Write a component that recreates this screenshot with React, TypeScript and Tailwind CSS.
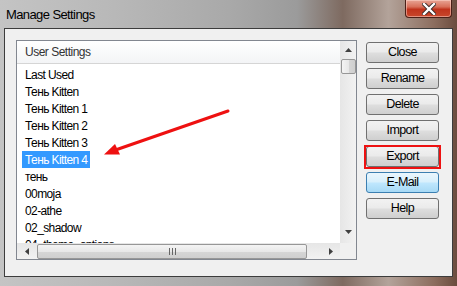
import React from "react";

const items = [
  "Last Used",
  "Тень Kitten",
  "Тень Kitten 1",
  "Тень Kitten 2",
  "Тень Kitten 3",
  "Тень Kitten 4",
  "тень",
  "00moja",
  "02-athe",
  "02_shadow",
  "04_theme_options",
];

function Btn({ label, variant }: { label: string; variant?: "blue" | "red" }) {
  const base =
    "relative w-[73px] h-[21px] rounded-[3px] border flex items-center justify-center text-[12.5px] tracking-[-0.6px] text-black leading-none";
  const cls =
    variant === "blue"
      ? "border-[#3c7fb1] bg-[linear-gradient(to_bottom,#eaf6fd_0%,#d9f0fc_45%,#bee6fd_55%,#a7d9f5_100%)]"
      : "border-[#707070] bg-[linear-gradient(to_bottom,#f2f2f2_0%,#ebebeb_45%,#dddddd_55%,#cfcfcf_100%)]";
  return (
    <div className={`${base} ${cls}`} style={{ fontFamily: '"Liberation Sans", Arial, sans-serif' }}>
      {label}
      {variant === "red" && (
        <span className="absolute left-[-3px] right-[-3px] top-[-2px] bottom-[-3px] border-2 border-[#ee1111]" />
      )}
    </div>
  );
}

export default function App() {
  return (
    <div
      className="relative w-[457px] h-[286px] overflow-hidden flex flex-col bg-[linear-gradient(to_right,#c4c4c4_0%,#b8b8b8_25%,#a9a9a9_50%,#9b9b9b_65%,#7e6a60_75%,#b3a39a_85%,#8c6d5e_95%,#6b4c3e_100%)]"
      style={{ fontFamily: '"Liberation Sans", Arial, sans-serif' }}
    >
      {/* title bar */}
      <div className="h-[28px] flex items-center pl-[6px] shrink-0 relative">
        <span className="text-[13px] text-black tracking-[-0.6px] mt-[1px]">Manage Settings</span>
        <div className="absolute left-[405px] top-0 w-[47px] h-[18px] rounded-b-[4px] border border-t-0 border-[#4a2018] bg-[linear-gradient(to_bottom,#e8a595_0%,#d8705a_40%,#c0331c_55%,#c8472c_100%)] flex items-center justify-center shadow-[inset_0_0_0_1px_rgba(255,220,210,0.5)]">
          <svg width="14" height="12" viewBox="0 0 14 12">
            <path d="M2 1 L12 11 M12 1 L2 11" stroke="#3a2a28" strokeWidth="4.2" strokeLinecap="square" />
            <path d="M2 1 L12 11 M12 1 L2 11" stroke="#ffffff" strokeWidth="2.4" strokeLinecap="square" />
          </svg>
        </div>
      </div>

      {/* client area */}
      <div className="ml-[4px] w-[449px] h-[249px] border border-[#3c3c3c] bg-[#f0f0f0] flex pl-[11px] pt-[11px] gap-[9px]">
        {/* list box */}
        <div className="w-[341px] h-[220px] border border-[#828790] bg-white flex">
          <div className="w-[323px] flex flex-col">
            <div className="h-[202px] overflow-hidden">
              <div className="h-[23px] border-b border-[#d5d5d5] bg-[linear-gradient(to_bottom,#ffffff_0%,#f3f4f6_100%)] flex items-center pl-[8px] text-[12px] tracking-[-0.5px] text-[#333]">
                User Settings
              </div>
              <div className="pt-[2px]">
                {items.map((it, i) => (
                  <div key={i} className="h-[17px] pl-[5px] flex items-center">
                    <span
                      className={`px-[3px] h-[17px] flex items-center text-[12px] tracking-[-0.6px] whitespace-nowrap ${
                        i === 5 ? "bg-[#3399ff] text-white" : "text-black"
                      }`}
                    >
                      {it}
                    </span>
                  </div>
                ))}
              </div>
            </div>
            {/* horizontal scrollbar */}
            <div className="h-[16px] bg-[linear-gradient(to_bottom,#e6e6e6,#f2f2f2)] flex items-center">
              <div className="w-[19px] h-[16px] flex items-center justify-center">
                <svg width="4" height="7" viewBox="0 0 4 7">
                  <path d="M4 0 L0 3.5 L4 7 Z" fill="#404040" />
                </svg>
              </div>
              <div className="w-[270px] h-[15px] ml-[1px] rounded-[2px] border border-[#979797] bg-[linear-gradient(to_bottom,#f4f4f4_0%,#e8e8e8_50%,#d6d6d6_51%,#cfcfcf_100%)] flex items-center justify-center gap-[2px]">
                <div className="w-[1px] h-[7px] bg-[#666]" />
                <div className="w-[1px] h-[7px] bg-[#666]" />
                <div className="w-[1px] h-[7px] bg-[#666]" />
              </div>
              <div className="flex-1 h-[16px] flex items-center justify-end pr-[7px]">
                <svg width="4" height="7" viewBox="0 0 4 7">
                  <path d="M0 0 L4 3.5 L0 7 Z" fill="#404040" />
                </svg>
              </div>
            </div>
          </div>
          {/* vertical scrollbar */}
          <div className="w-[16px] flex flex-col">
            <div className="h-[202px] bg-[linear-gradient(to_right,#e6e6e6,#f2f2f2)] flex flex-col items-center">
              <div className="h-[18px] w-full flex items-center justify-center">
                <svg width="7" height="4" viewBox="0 0 7 4">
                  <path d="M0 4 L3.5 0 L7 4 Z" fill="#404040" />
                </svg>
              </div>
              <div className="w-[15px] h-[15px] ml-[1px] rounded-[2px] border border-[#979797] bg-[linear-gradient(to_right,#f4f4f4_0%,#e8e8e8_50%,#d6d6d6_51%,#cfcfcf_100%)]" />
              <div className="flex-1" />
              <div className="h-[18px] w-full flex items-center justify-center pb-[4px]">
                <svg width="7" height="4" viewBox="0 0 7 4">
                  <path d="M0 0 L3.5 4 L7 0 Z" fill="#404040" />
                </svg>
              </div>
            </div>
            <div className="h-[16px] bg-[#f0f0f0]" />
          </div>
        </div>

        {/* buttons */}
        <div className="flex flex-col gap-[5px] pt-[2px]">
          <Btn label="Close" />
          <Btn label="Rename" />
          <Btn label="Delete" />
          <Btn label="Import" />
          <Btn label="Export" variant="red" />
          <Btn label="E-Mail" variant="blue" />
          <Btn label="Help" />
        </div>
      </div>

      {/* red annotation arrow */}
      <svg
        className="absolute left-0 top-0 pointer-events-none"
        width="457"
        height="286"
        viewBox="0 0 457 286"
      >
        <line x1="228" y1="111" x2="114" y2="150.5" stroke="#ee1111" strokeWidth="3" strokeLinecap="round" />
        <path d="M104 154.5 L115 144 L120 154.5 Z" fill="#ee1111" />
      </svg>
    </div>
  );
}
